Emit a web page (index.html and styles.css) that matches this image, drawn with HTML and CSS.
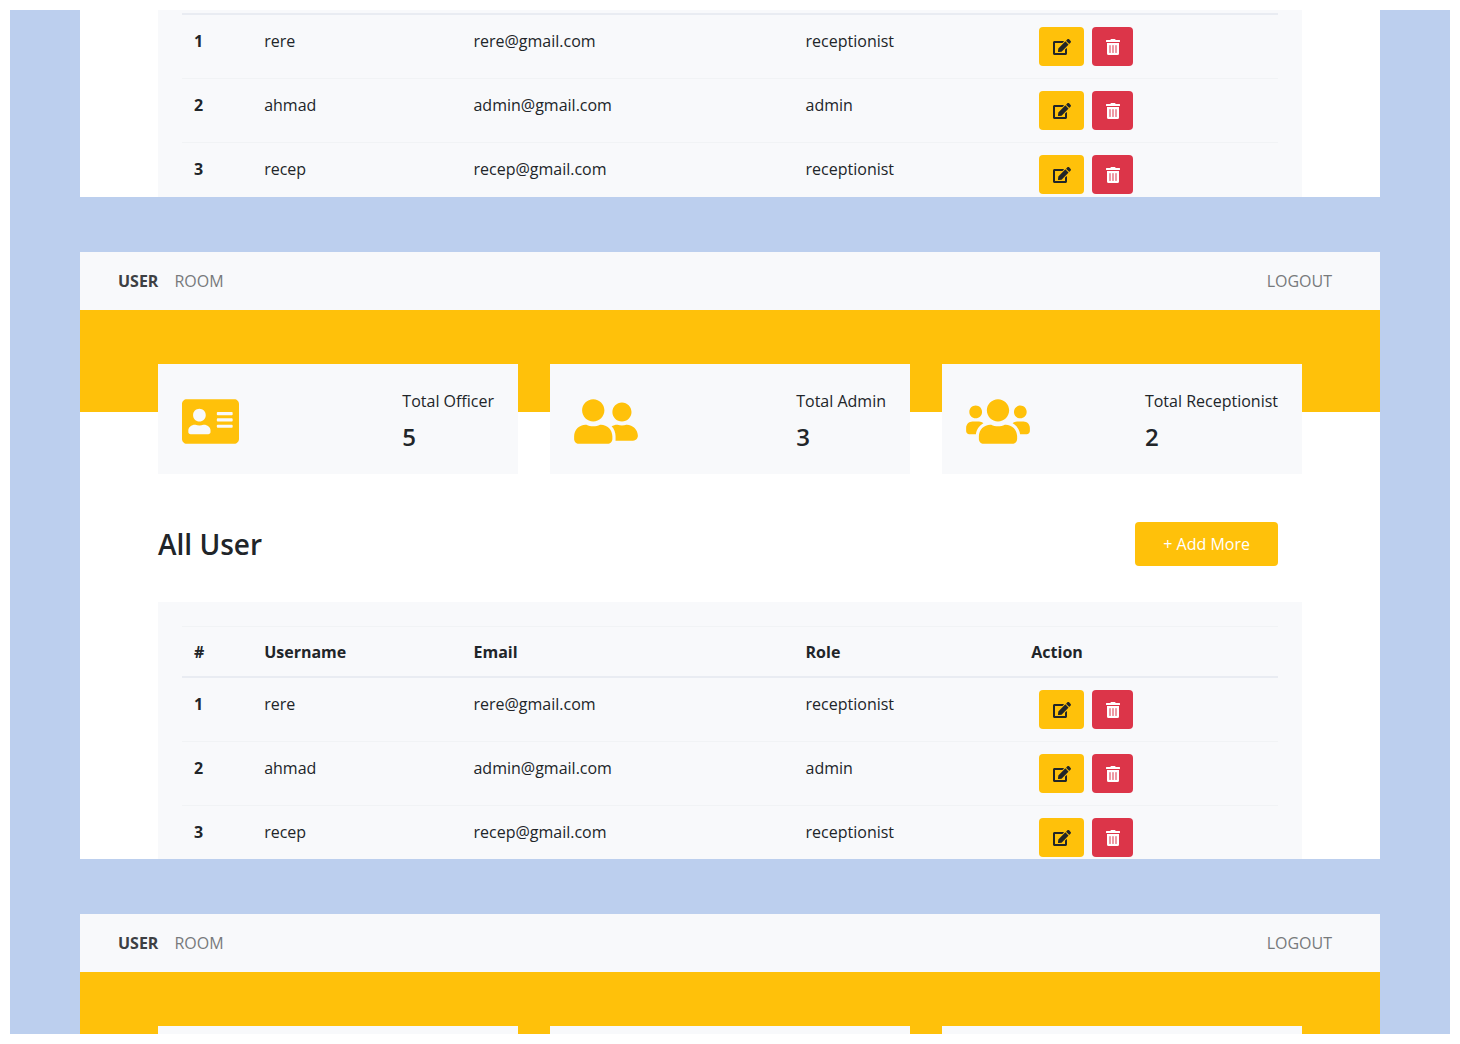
FILE: index.html
```html
<!DOCTYPE html>
<html lang="en">
<head>
<meta charset="utf-8">
<meta name="viewport" content="width=device-width, initial-scale=1">
<title>All User</title>
<link rel="stylesheet" href="styles.css">
</head>
<body>
<svg class="sprite" aria-hidden="true">
  <symbol id="card" viewBox="0 0 576 512"><path d="M528 32H48C21.500 32 0 53.500 0 80v352c0 26.500 21.500 48 48 48h480c26.500 0 48-21.500 48-48V80c0-26.500-21.500-48-48-48zm-352 96c35.300 0 64 28.700 64 64s-28.700 64-64 64-64-28.700-64-64 28.700-64 64-64zm112 236.800c0 10.600-10 19.200-22.400 19.200H86.400C74 384 64 375.400 64 364.800v-19.200c0-31.800 30.100-57.600 67.200-57.600h5c12.300 5.100 25.700 8 39.800 8s27.600-2.900 39.800-8h5c37.100 0 67.200 25.800 67.200 57.600v19.200zM512 312c0 4.400-3.600 8-8 8H360c-4.400 0-8-3.600-8-8v-16c0-4.400 3.600-8 8-8h144c4.400 0 8 3.600 8 8v16zm0-64c0 4.400-3.600 8-8 8H360c-4.400 0-8-3.600-8-8v-16c0-4.400 3.600-8 8-8h144c4.400 0 8 3.600 8 8v16zm0-64c0 4.400-3.600 8-8 8H360c-4.400 0-8-3.600-8-8v-16c0-4.400 3.600-8 8-8h144c4.400 0 8 3.600 8 8v16z"/></symbol>
  <symbol id="friends" viewBox="0 0 640 512"><path d="M192 256c61.900 0 112-50.100 112-112S253.900 32 192 32 80 82.100 80 144s50.100 112 112 112zm76.800 32h-8.300c-20.800 10-43.900 16-68.500 16s-47.600-6-68.500-16h-8.300C51.600 288 0 339.600 0 403.200V432c0 26.500 21.500 48 48 48h288c26.500 0 48-21.500 48-48v-28.800c0-63.600-51.600-115.200-115.200-115.200zM480 256c53 0 96-43 96-96s-43-96-96-96-96 43-96 96 43 96 96 96zm48 32h-3.800c-13.900 4.800-28.600 8-44.200 8s-30.300-3.200-44.200-8H432c-20.400 0-39.200 5.900-55.700 15.400 24.400 26.300 39.700 61.200 39.700 99.800v38.400c0 2.200-.5 4.300-.6 6.400H592c26.500 0 48-21.500 48-48 0-61.900-50.100-112-112-112z"/></symbol>
  <symbol id="users" viewBox="0 0 640 512"><path d="M96 224c35.300 0 64-28.700 64-64s-28.700-64-64-64-64 28.700-64 64 28.700 64 64 64zm448 0c35.300 0 64-28.700 64-64s-28.700-64-64-64-64 28.700-64 64 28.700 64 64 64zm32 32h-64c-17.600 0-33.500 7.100-45.100 18.600 40.300 22.100 68.900 62 75.100 109.400h66c17.700 0 32-14.300 32-32v-32c0-35.300-28.700-64-64-64zm-256 0c61.900 0 112-50.100 112-112S381.900 32 320 32 208 82.100 208 144s50.100 112 112 112zm76.800 32h-8.300c-20.800 10-43.900 16-68.500 16s-47.600-6-68.500-16h-8.300C179.600 288 128 339.600 128 403.200V432c0 26.500 21.500 48 48 48h288c26.500 0 48-21.500 48-48v-28.800c0-63.600-51.600-115.200-115.200-115.200zm-223.700-13.400C161.500 263.100 145.600 256 128 256H64c-35.300 0-64 28.700-64 64v32c0 17.700 14.300 32 32 32h65.900c6.300-47.400 34.900-87.300 75.200-109.400z"/></symbol>
  <symbol id="edit" viewBox="0 0 576 512"><path d="M402.600 83.200l90.200 90.200c3.800 3.800 3.800 10 0 13.800L274.400 405.600l-92.800 10.300c-12.400 1.400-22.900-9.100-21.500-21.500l10.300-92.800L388.800 83.200c3.800-3.800 10-3.800 13.800 0zm162-22.900l-48.800-48.800c-15.200-15.200-39.900-15.200-55.200 0l-35.400 35.400c-3.800 3.800-3.800 10 0 13.800l90.200 90.200c3.800 3.800 10 3.800 13.800 0l35.400-35.400c15.200-15.300 15.200-40 0-55.200zM384 346.200V448H64V128h229.800c3.200 0 6.200-1.300 8.500-3.500l40-40c7.600-7.600 2.200-20.500-8.500-20.500H48C21.500 64 0 85.500 0 112v352c0 26.500 21.500 48 48 48h352c26.500 0 48-21.500 48-48V306.200c0-10.700-12.900-16-20.500-8.500l-40 40c-2.200 2.300-3.500 5.300-3.500 8.500z"/></symbol>
  <symbol id="trash" viewBox="0 0 448 512"><path d="M32 464a48 48 0 0 0 48 48h288a48 48 0 0 0 48-48V128H32zm272-256a16 16 0 0 1 32 0v224a16 16 0 0 1-32 0zm-96 0a16 16 0 0 1 32 0v224a16 16 0 0 1-32 0zm-96 0a16 16 0 0 1 32 0v224a16 16 0 0 1-32 0zM432 32H312l-9.400-18.700A24 24 0 0 0 281.100 0H166.800a23.700 23.700 0 0 0-21.400 13.300L136 32H16A16 16 0 0 0 0 48v32a16 16 0 0 0 16 16h416a16 16 0 0 0 16-16V48a16 16 0 0 0-16-16z"/></symbol>
</svg>
<main class="gallery">
  <section class="screen screen-tail">
    <div class="panel">
      <table class="users">
        <colgroup><col class="c-num"><col class="c-name"><col class="c-email"><col class="c-role"><col></colgroup>
        <tbody>
          <tr><th scope="row">1</th><td>rere</td><td>rere@gmail.com</td><td>receptionist</td><td class="actions"><div class="buttons"><button class="edit" aria-label="Edit"><svg><use href="#edit"/></svg></button><button class="delete" aria-label="Delete"><svg><use href="#trash"/></svg></button></div></td></tr>
          <tr><th scope="row">2</th><td>ahmad</td><td>admin@gmail.com</td><td>admin</td><td class="actions"><div class="buttons"><button class="edit" aria-label="Edit"><svg><use href="#edit"/></svg></button><button class="delete" aria-label="Delete"><svg><use href="#trash"/></svg></button></div></td></tr>
          <tr><th scope="row">3</th><td>recep</td><td>recep@gmail.com</td><td>receptionist</td><td class="actions"><div class="buttons"><button class="edit" aria-label="Edit"><svg><use href="#edit"/></svg></button><button class="delete" aria-label="Delete"><svg><use href="#trash"/></svg></button></div></td></tr>
        </tbody>
      </table>
    </div>
  </section>

  <section class="screen screen-full">
    <nav class="nav"><a class="active" href="#">USER</a><a href="#">ROOM</a><a class="logout" href="#">LOGOUT</a></nav>
    <div class="hero"></div>
    <div class="cards">
      <article class="card"><svg class="narrow"><use href="#card"/></svg><div><p>Total Officer</p><strong>5</strong></div></article>
      <article class="card"><svg><use href="#friends"/></svg><div><p>Total Admin</p><strong>3</strong></div></article>
      <article class="card"><svg><use href="#users"/></svg><div><p>Total Receptionist</p><strong>2</strong></div></article>
    </div>
    <header class="heading"><h1>All User</h1><button class="add">+ Add More</button></header>
    <div class="panel">
      <table class="users">
        <colgroup><col class="c-num"><col class="c-name"><col class="c-email"><col class="c-role"><col></colgroup>
        <thead><tr><th scope="col">#</th><th scope="col">Username</th><th scope="col">Email</th><th scope="col">Role</th><th scope="col">Action</th></tr></thead>
        <tbody>
          <tr><th scope="row">1</th><td>rere</td><td>rere@gmail.com</td><td>receptionist</td><td class="actions"><div class="buttons"><button class="edit" aria-label="Edit"><svg><use href="#edit"/></svg></button><button class="delete" aria-label="Delete"><svg><use href="#trash"/></svg></button></div></td></tr>
          <tr><th scope="row">2</th><td>ahmad</td><td>admin@gmail.com</td><td>admin</td><td class="actions"><div class="buttons"><button class="edit" aria-label="Edit"><svg><use href="#edit"/></svg></button><button class="delete" aria-label="Delete"><svg><use href="#trash"/></svg></button></div></td></tr>
          <tr><th scope="row">3</th><td>recep</td><td>recep@gmail.com</td><td>receptionist</td><td class="actions"><div class="buttons"><button class="edit" aria-label="Edit"><svg><use href="#edit"/></svg></button><button class="delete" aria-label="Delete"><svg><use href="#trash"/></svg></button></div></td></tr>
        </tbody>
      </table>
    </div>
  </section>

  <section class="screen">
    <nav class="nav"><a class="active" href="#">USER</a><a href="#">ROOM</a><a class="logout" href="#">LOGOUT</a></nav>
    <div class="hero"></div>
    <div class="cards"><article class="card"></article><article class="card"></article><article class="card"></article></div>
  </section>
</main>
</body>
</html>
```

FILE: styles.css
```css
* { box-sizing: border-box; }
body {
  margin: 0;
  padding: 10px;
  height: 100vh;
  overflow: hidden;
  background: #fff;
  color: #212529;
  font: 16px/24px "Open Sans", sans-serif;
}
h1, p { margin: 0; }
button { border: 0; padding: 0; border-radius: 4px; font: inherit; cursor: pointer; }
svg { display: block; fill: currentColor; }
.sprite { position: absolute; width: 0; height: 0; }

.gallery {
  height: 100%;
  overflow: hidden;
  padding: 0 70px;
  display: flex;
  flex-direction: column;
  gap: 55px;
  background: #bccfee;
}
.screen { flex: none; background: #fff; overflow: hidden; }
.screen-tail { max-height: 187px; }
.screen-full { max-height: 607px; }

.nav {
  display: flex;
  gap: 16px;
  padding: 17px 48px 17px 38px;
  background: #f8f9fb;
}
.nav a { color: #777a7c; text-decoration: none; }
.nav .active { color: #3d4043; font-weight: 700; }
.nav .logout { margin-left: auto; }
.hero { height: 102px; background: #ffc10a; }

.cards {
  display: grid;
  grid-template-columns: repeat(3, 1fr);
  gap: 32px;
  margin: -48px 78px 0;
}
.card {
  display: flex;
  justify-content: space-between;
  align-items: center;
  height: 110px;
  padding: 26px 24px 22px;
  background: #f8f9fb;
}
.card svg { width: 64px; height: 51px; color: #ffc10a; }
.card .narrow { width: 57px; }
.card strong { display: block; padding-top: 8px; font-size: 24px; line-height: 32px; font-weight: 600; }

.heading {
  display: flex;
  justify-content: space-between;
  align-items: center;
  margin: 48px 78px 36px;
  padding-right: 24px;
}
.heading h1 { font-size: 28px; line-height: 36px; font-weight: 600; }
.add { padding: 10px 28px; background: #ffc10a; color: #fff; line-height: 24px; }

.panel { margin: 0 78px; padding: 24px; background: #f8f9fb; }
.screen-tail .panel { padding-top: 3px; }
.users { width: 100%; table-layout: fixed; border-collapse: separate; border-spacing: 0; text-align: left; }
.users th, .users td { padding: 14px 12px 24px; border-bottom: 1px solid #f1f3f5; vertical-align: top; }
.users thead th { padding: 13px 12px 12px; border-top: 1px solid #f1f3f5; border-bottom: 2px solid #e9ecf2; }
.screen-tail tbody tr:first-child > * { border-top: 2px solid #e9ecf2; }
.users th { font-weight: 700; }
.users td.actions { padding: 12px 20px; }
.c-num { width: 6.4%; }
.c-name { width: 19.1%; }
.c-email { width: 30.3%; }
.c-role { width: 20.6%; }
.buttons { display: flex; gap: 8px; }
.buttons button { height: 39px; display: grid; place-items: center; }
.buttons svg { height: 16px; width: 18px; }
.edit { width: 45px; background: #ffc10a; color: #212529; }
.delete { width: 41px; background: #dc3549; color: #fff; }
```
